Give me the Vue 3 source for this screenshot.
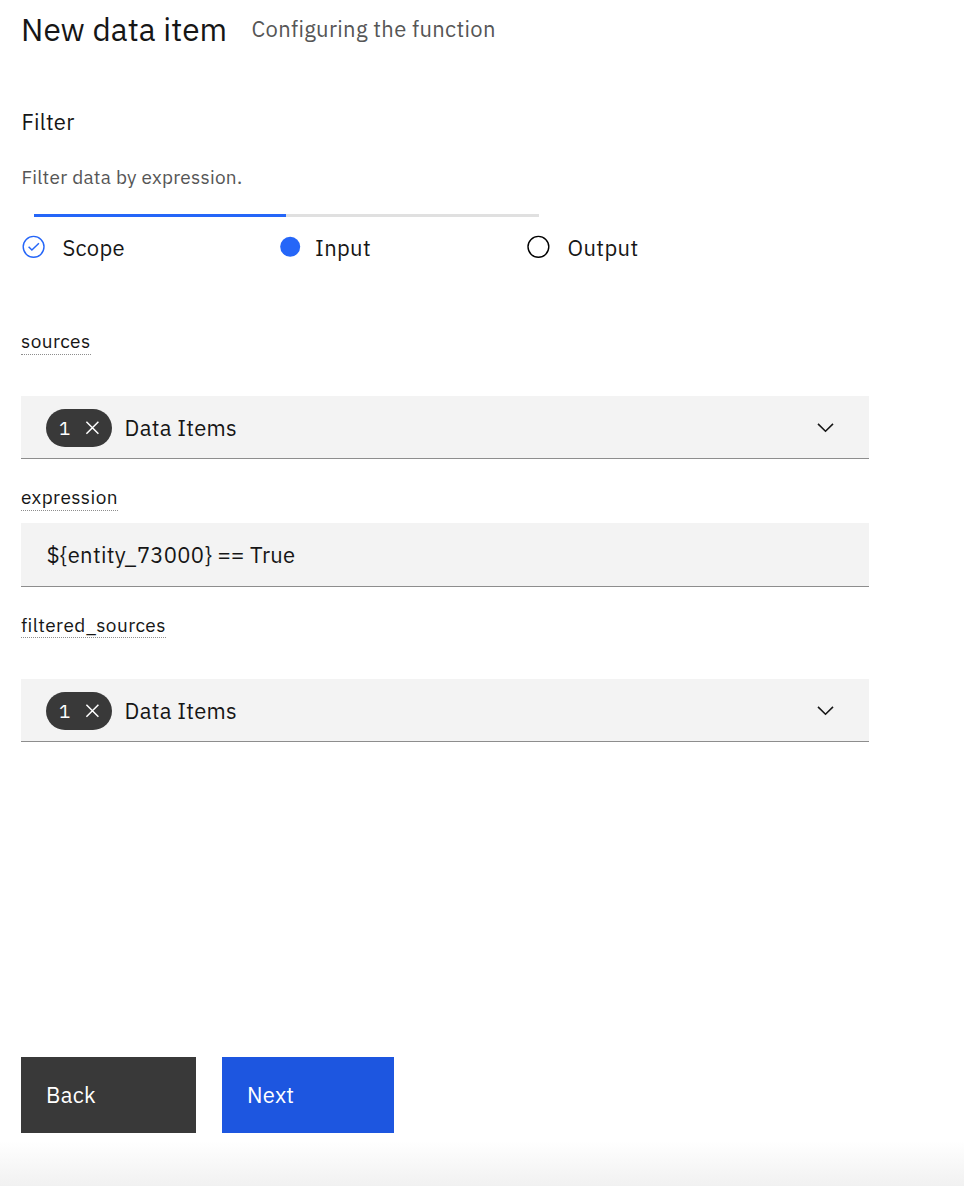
<script setup>
const steps = [
  { label: 'Scope', state: 'complete' },
  { label: 'Input', state: 'current' },
  { label: 'Output', state: 'incomplete' },
]
const fields = [
  { name: 'sources', type: 'select', count: 1, value: 'Data Items' },
  { name: 'expression', type: 'text', value: '${entity_73000} == True' },
  { name: 'filtered_sources', type: 'select', count: 1, value: 'Data Items' },
]
</script>

<template>
  <main class="panel">
    <header class="header">
      <h1>New data item</h1>
      <span class="subtitle">Configuring the function</span>
    </header>

    <h2>Filter</h2>
    <p class="description">Filter data by expression.</p>

    <div class="track"><span class="track-done"></span></div>
    <ol class="steps">
      <li v-for="step in steps" :key="step.label" class="step">
        <svg class="step-icon" width="24" height="24" viewBox="0 0 24 24" fill="none">
          <template v-if="step.state === 'complete'">
            <circle cx="12.6" cy="11.8" r="10.4" stroke="#2566f8" stroke-width="1.4" />
            <path d="M7.6 11.8l3.3 3.2 7-6.8" stroke="#2566f8" stroke-width="1.5" />
          </template>
          <circle v-else-if="step.state === 'current'" cx="16.2" cy="11.8" r="10" fill="#2566f8" />
          <circle v-else cx="12.4" cy="11.8" r="10.4" stroke="#000" stroke-width="1.4" />
        </svg>
        <span class="step-label">{{ step.label }}</span>
      </li>
    </ol>

    <section v-for="field in fields" :key="field.name" :class="['field', field.name]">
      <label class="field-label">{{ field.name }}</label>
      <div v-if="field.type === 'select'" class="control select">
        <span class="tag">
          <span>{{ field.count }}</span>
          <svg width="14" height="14" viewBox="0 0 14 14" fill="none" stroke="#fff" stroke-width="1.5">
            <path d="M1.4 .8l12 12M13.4 .8L1.4 12.8" />
          </svg>
        </span>
        <span class="value">{{ field.value }}</span>
        <svg class="chevron" width="18" height="12" viewBox="0 0 18 12" fill="none" stroke="#161616" stroke-width="1.6">
          <path d="M2 1.9L9.5 9.2 17 1.9" />
        </svg>
      </div>
      <div v-else class="control text"><span class="value">{{ field.value }}</span></div>
    </section>

    <footer class="actions">
      <button class="btn back">Back</button>
      <button class="btn next">Next</button>
    </footer>
    <div class="fade"></div>
  </main>
</template>

<style>
body {
  margin: 0;
  background: #fff;
}
</style>

<style scoped>
.panel {
  box-sizing: border-box;
  width: 964px;
  height: 1186px;
  padding-left: 21px;
  display: flex;
  flex-direction: column;
  overflow: hidden;
  background: #fff;
  color: #161616;
  font-family: "IBM Plex Sans", Roboto, "Liberation Sans", sans-serif;
  font-size: 22px;
  letter-spacing: 0.28px;
  white-space: nowrap;
}
.header {
  display: flex;
  height: 60px;
}
h1 {
  margin: 0;
  width: 230.6px;
  font-size: 31.6px;
  line-height: 60px;
  font-weight: 400;
  letter-spacing: 0.04px;
}
.subtitle {
  line-height: 57px;
  color: #565656;
  letter-spacing: 0.31px;
}
h2 {
  margin: 47px 0 0;
  padding-left: 0.4px;
  font-size: 22px;
  line-height: 29px;
  font-weight: 400;
}
.description {
  margin: 29px 0 0;
  padding-left: 0.4px;
  font-size: 19px;
  line-height: 25px;
  color: #565656;
  letter-spacing: 0.26px;
}
.track {
  margin: 24px 0 0 13px;
  width: 505px;
  height: 3px;
  background: #e0e0e0;
}
.track-done {
  display: block;
  width: 252px;
  height: 3px;
  background: #2566f8;
}
.steps {
  display: flex;
  margin: 17px 0 0;
  padding: 0;
  list-style: none;
}
.step {
  display: flex;
  width: 252.6px;
  height: 29px;
}
.step-icon {
  margin-top: 1px;
  flex: none;
  overflow: visible;
}
.step-label {
  margin-left: 17.4px;
  line-height: 27px;
  letter-spacing: 0.35px;
}
.field {
  display: flex;
  flex-direction: column;
  align-items: flex-start;
}
.sources {
  margin-top: 66px;
}
.expression {
  margin-top: 26px;
}
.filtered_sources {
  margin-top: 26px;
}
.field-label {
  font-size: 19px;
  line-height: 25px;
  border-bottom: 1px dotted #8d8d8d;
  letter-spacing: 0.42px;
}
.filtered_sources .field-label {
  line-height: 24px;
  padding-top: 0;
}
.control {
  box-sizing: border-box;
  display: flex;
  align-items: center;
  width: 848px;
  background: #f3f3f3;
  border-bottom: 1px solid #8d8d8d;
}
.select {
  height: 63px;
  margin-top: 41px;
  padding: 2px 35px 0 25px;
}
.text {
  height: 64px;
  margin-top: 12px;
  padding: 2px 25.5px 0;
}
.tag {
  box-sizing: border-box;
  display: flex;
  align-items: center;
  justify-content: space-between;
  width: 66px;
  height: 38px;
  margin-right: 12.6px;
  padding: 0 13px;
  border-radius: 19px;
  background: #393939;
  color: #fff;
  font-size: 19px;
}
.value {
  padding-bottom: 2px;
}
.chevron {
  margin-left: auto;
}
.actions {
  display: flex;
  gap: 26px;
  margin-top: auto;
}
.btn {
  height: 76px;
  padding: 0 0 2px 25px;
  border: 0;
  color: #fff;
  font: inherit;
  text-align: left;
  letter-spacing: 0.28px;
}
.back {
  width: 175px;
  background: #393939;
}
.next {
  width: 172px;
  background: #1d56e0;
}
.fade {
  flex: none;
  height: 45px;
  margin: 8px 0 0 -21px;
  background: linear-gradient(#fff, #f1f1f1);
}
</style>
